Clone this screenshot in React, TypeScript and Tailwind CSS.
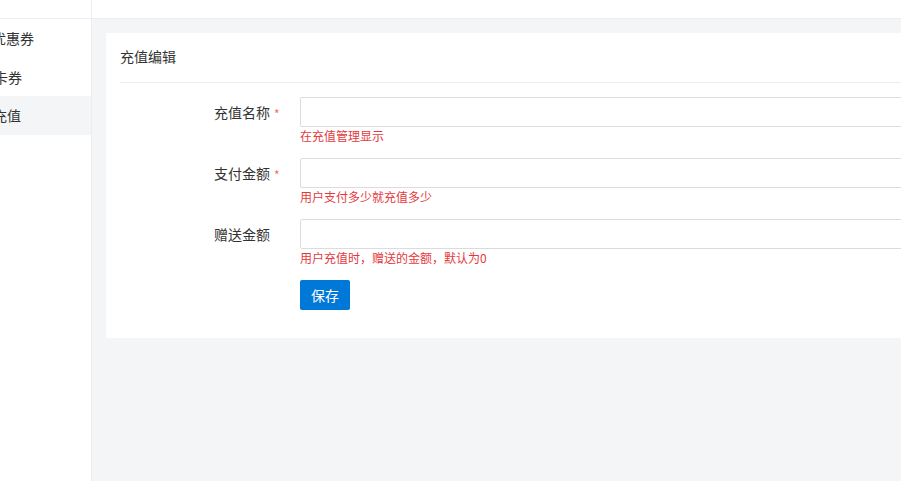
import React from "react";

const font = { fontFamily: '"Microsoft YaHei", "Noto Sans CJK SC", "Noto Sans", sans-serif' };

function Row({ label, required, help }: { label: string; required?: boolean; help: string }) {
  return (
    <div className="flex h-[61px]">
      <div className="w-[150px] h-[30px] flex items-center justify-end text-[14px] text-[#333]">{label}</div>
      <div className="w-[30px] h-[30px] flex items-center pl-[4px]">
        {required && <span className="text-[12px] text-[#f56c6c] leading-none mt-[3px]">*</span>}
      </div>
      <div className="flex-1 flex flex-col">
        <input className="h-[30px] w-full border border-[#dcdcdc] rounded-[2px] bg-white outline-none" />
        <div className="text-[12px] text-[#e4393c] leading-[16px] mt-[1px]">{help}</div>
      </div>
    </div>
  );
}

export default function App() {
  return (
    <div className="w-[901px] h-[481px] overflow-hidden flex bg-white" style={font}>
      <div className="w-[92px] shrink-0 border-r border-[#ebedf0] flex flex-col">
        <div className="h-[19px] border-b border-[#ebedf0]"></div>
        <div className="pt-[1px] text-[14px] text-[#333]">
          <div className="h-[38px] flex items-center ml-[-8px] pb-[2px] whitespace-nowrap">优惠券</div>
          <div className="h-[38px] flex items-center ml-[-6px] whitespace-nowrap">卡券</div>
          <div className="h-[39px] flex items-center bg-[#f4f5f7] whitespace-nowrap"><span className="ml-[-7px]">充值</span></div>
        </div>
      </div>
      <div className="flex-1 flex flex-col overflow-hidden">
        <div className="h-[19px] shrink-0 bg-white border-b border-[#ebedf0]"></div>
        <div className="flex-1 bg-[#f4f5f7] pt-[14px] pl-[14px]">
          <div className="bg-white w-[1000px] h-[305px] px-[14px]">
            <div className="h-[49px] flex items-center text-[14px] text-[#333] pb-[2px]">充值编辑</div>
            <div className="h-px bg-[#ebedf0]"></div>
            <div className="pt-[14px]">
              <Row label="充值名称" required help="在充值管理显示" />
              <Row label="支付金额" required help="用户支付多少就充值多少" />
              <Row label="赠送金额" help="用户充值时，赠送的金额，默认为0" />
              <div className="flex">
                <div className="w-[180px]"></div>
                <button className="w-[50px] h-[30px] bg-[#0078d7] text-white text-[14px] rounded-[2px]">保存</button>
              </div>
            </div>
          </div>
        </div>
      </div>
    </div>
  );
}
